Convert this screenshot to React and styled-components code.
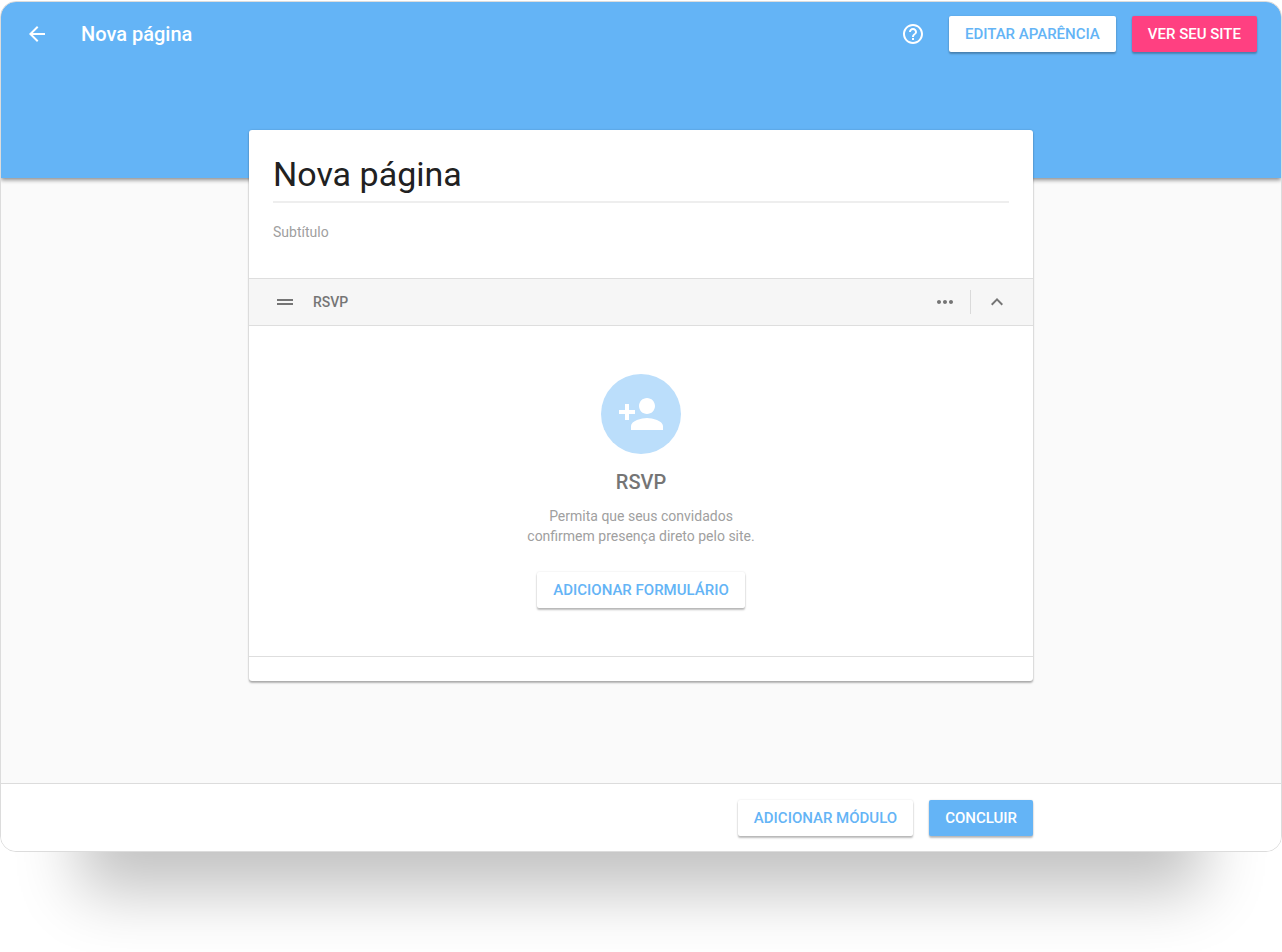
import React, { useState } from "react";
import styled, { createGlobalStyle } from "styled-components";
import {
  MdArrowBack,
  MdHelpOutline,
  MdDragHandle,
  MdMoreHoriz,
  MdKeyboardArrowUp,
  MdPersonAdd,
} from "react-icons/md";

const GlobalStyle = createGlobalStyle`
  *, *::before, *::after { box-sizing: border-box; }
  body {
    margin: 0;
    background: #fff;
    font-family: Roboto, "Liberation Sans", sans-serif;
    font-size: 14px;
    line-height: 20px;
  }
  h1, h2, h3, p { margin: 0; }
`;

const Page = styled.div`
  padding: 1px 0 100px;
  overflow: hidden;
`;

const Window = styled.div`
  border: 1px solid #dcdcdc;
  border-radius: 16px;
  background: #fafafa;
  box-shadow: 0 120px 60px -80px rgba(0, 0, 0, 0.24);
`;

const Header = styled.header`
  height: 176px;
  border-radius: 15px 15px 0 0;
  background: #64b4f6;
  box-shadow: 0 2px 4px rgba(0, 0, 0, 0.45);
  clip-path: inset(0 0 -8px 0 round 15px 15px 0 0);
`;

const Toolbar = styled.div`
  display: flex;
  align-items: center;
  height: 64px;
  padding: 0 24px;
`;

const ToolbarTitle = styled.h1`
  flex: 1;
  margin-left: 32px;
  color: #fff;
  font-size: 20px;
  font-weight: 500;
  line-height: 24px;
`;

const Actions = styled.div`
  display: flex;
  align-items: center;
  gap: 16px;
`;

const IconButton = styled.button`
  display: flex;
  padding: 0;
  border: 0;
  background: none;
  color: ${(p) => p.$color || "#757575"};
  font-size: 24px;
  cursor: pointer;
`;

const HelpButton = styled(IconButton)`
  margin-right: 8px;
`;

const tones = {
  plain: { background: "#fff", color: "#64b4f6" },
  primary: { background: "#64b4f6", color: "#fff" },
  accent: { background: "#ff4081", color: "#fff" },
};

const Button = styled.button`
  height: 36px;
  padding: 0 16px;
  border: 0;
  border-radius: 2px;
  background: ${(p) => tones[p.$tone].background};
  color: ${(p) => tones[p.$tone].color};
  box-shadow: 0 0 2px rgba(0, 0, 0, 0.12), 0 2px 2px rgba(0, 0, 0, 0.26);
  font: 500 15px/20px Roboto, "Liberation Sans", sans-serif;
  text-transform: uppercase;
  white-space: nowrap;
  cursor: pointer;
`;

const Main = styled.main`
  position: relative;
  max-width: 784px;
  margin: -48px auto 0;
  padding-bottom: 102px;
`;

const Card = styled.section`
  padding-bottom: 24px;
  border-radius: 3px;
  background: #fff;
  box-shadow: 0 0 2px rgba(0, 0, 0, 0.2), 0 2px 2px rgba(0, 0, 0, 0.28);
`;

const Heading = styled.div`
  display: flex;
  flex-direction: column;
  height: 148px;
  padding: 24px 24px 0;
`;

const TitleInput = styled.input`
  width: 100%;
  height: 49px;
  padding: 0 0 8px;
  border: 0;
  border-bottom: 2px solid #eee;
  outline: none;
  background: none;
  color: #212121;
  font: 400 34px/40px Roboto, "Liberation Sans", sans-serif;
`;

const SubtitleInput = styled.input`
  width: 100%;
  height: 20px;
  margin-top: 19px;
  padding: 0;
  border: 0;
  outline: none;
  background: none;
  color: #212121;
  font: 400 14px/20px Roboto, "Liberation Sans", sans-serif;

  &::placeholder {
    color: #a0a0a0;
    opacity: 1;
  }
`;

const ModuleBar = styled.div`
  display: flex;
  align-items: center;
  height: 48px;
  padding: 0 24px;
  border: solid #dedede;
  border-width: 1px 0;
  background: #f6f6f6;
`;

const ModuleName = styled.h2`
  flex: 1;
  margin-left: 16px;
  color: #757575;
  font-size: 14px;
  font-weight: 500;
`;

const Divider = styled.span`
  width: 1px;
  height: 24px;
  margin: 0 14px 0 13px;
  background: #dadada;
`;

const ModuleBody = styled.div`
  display: flex;
  flex-direction: column;
  align-items: center;
  padding: 48px 24px;
  border-bottom: 1px solid #dedede;
  text-align: center;
`;

const Badge = styled.div`
  display: flex;
  align-items: center;
  justify-content: center;
  width: 80px;
  height: 80px;
  border-radius: 50%;
  background: #bbdefb;
  color: #fff;
  font-size: 48px;
`;

const EmptyTitle = styled.h3`
  margin-top: 16px;
  color: #757575;
  font-size: 20px;
  font-weight: 500;
  line-height: 24px;
`;

const EmptyText = styled.p`
  max-width: 240px;
  margin: 12px 0 26px;
  color: #a0a0a0;
`;

const Footer = styled.footer`
  padding: 16px 0 15px;
  border-top: 1px solid #dcdcdc;
  border-radius: 0 0 15px 15px;
  background: #fff;
`;

const FooterActions = styled(Actions)`
  justify-content: flex-end;
  max-width: 784px;
  margin: 0 auto;
`;

export default function App() {
  const [title, setTitle] = useState("Nova página");
  const [subtitle, setSubtitle] = useState("");

  return (
    <Page>
      <GlobalStyle />
      <Window>
        <Header>
          <Toolbar>
            <IconButton type="button" $color="#fff" aria-label="Voltar">
              <MdArrowBack />
            </IconButton>
            <ToolbarTitle>Nova página</ToolbarTitle>
            <Actions>
              <HelpButton type="button" $color="#fff" aria-label="Ajuda">
                <MdHelpOutline />
              </HelpButton>
              <Button type="button" $tone="plain">Editar aparência</Button>
              <Button type="button" $tone="accent">Ver seu site</Button>
            </Actions>
          </Toolbar>
        </Header>
        <Main>
          <Card>
            <Heading>
              <TitleInput
                aria-label="Título"
                value={title}
                onChange={(e) => setTitle(e.target.value)}
              />
              <SubtitleInput
                aria-label="Subtítulo"
                placeholder="Subtítulo"
                value={subtitle}
                onChange={(e) => setSubtitle(e.target.value)}
              />
            </Heading>
            <ModuleBar>
              <IconButton type="button" aria-label="Mover módulo">
                <MdDragHandle />
              </IconButton>
              <ModuleName>RSVP</ModuleName>
              <IconButton type="button" aria-label="Mais opções">
                <MdMoreHoriz />
              </IconButton>
              <Divider />
              <IconButton type="button" aria-label="Recolher">
                <MdKeyboardArrowUp />
              </IconButton>
            </ModuleBar>
            <ModuleBody>
              <Badge>
                <MdPersonAdd />
              </Badge>
              <EmptyTitle>RSVP</EmptyTitle>
              <EmptyText>
                Permita que seus convidados
                <br />
                confirmem presença direto pelo site.
              </EmptyText>
              <Button type="button" $tone="plain">Adicionar formulário</Button>
            </ModuleBody>
          </Card>
        </Main>
        <Footer>
          <FooterActions>
            <Button type="button" $tone="plain">Adicionar módulo</Button>
            <Button type="button" $tone="primary">Concluir</Button>
          </FooterActions>
        </Footer>
      </Window>
    </Page>
  );
}
